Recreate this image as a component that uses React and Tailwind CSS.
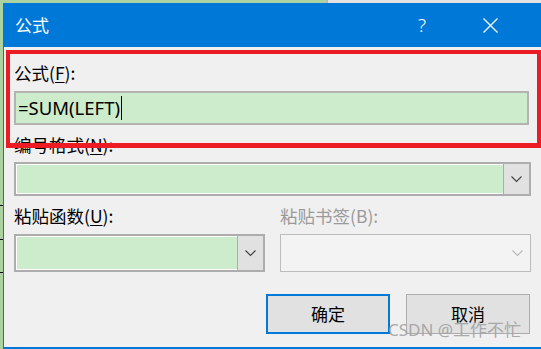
import React from "react";

const FONT = { fontFamily: '"Noto Sans", "Noto Sans CJK SC", sans-serif' };
const CJK = { fontFamily: '"Noto Sans CJK SC", "Noto Sans", sans-serif' };

function Chevron({ color = "#404040" }) {
  return (
    <svg width="11" height="7" viewBox="0 0 11 7">
      <polyline points="0.5,0.5 5.5,5.5 10.5,0.5" fill="none" stroke={color} strokeWidth="1.1" />
    </svg>
  );
}

function Combo({ className = "", disabled = false }) {
  if (disabled) {
    return (
      <div className={`flex border border-[#bcbcbc] bg-[#f3f3f3] ${className}`}>
        <div className="flex-1" />
        <div className="w-[26px] flex items-center justify-center">
          <Chevron color="#b8b8b8" />
        </div>
      </div>
    );
  }
  return (
    <div className={`flex border-2 border-[#adadad] bg-white ${className}`}>
      <div className="flex-1 pl-[1px] py-[1px]">
        <div className="h-full bg-[#cdeccb]" />
      </div>
      <div className="w-[26px] bg-[#e1e1e1] border-l border-[#adadad] flex items-center justify-center">
        <Chevron />
      </div>
    </div>
  );
}

function Label({ cn, letter, gray = false, underline = true }) {
  return (
    <div
      className={`h-[20px] flex items-center text-[17.5px] leading-[20px] ${gray ? "text-[#9a9a9a]" : "text-black"}`}
      style={CJK}
    >
      {cn}(
      <span className={underline ? "underline underline-offset-2 decoration-1" : ""}>{letter}</span>
      ):
    </div>
  );
}

export default function App() {
  return (
    <div className="relative w-[541px] h-[349px] overflow-hidden bg-[#acd2a2] flex flex-col" style={FONT}>
      {/* top strip of background */}
      <div className="h-[3px] flex shrink-0">
        <div className="w-[326px] bg-[#acd2a2]" />
        <div className="w-[2px] bg-[#b9b9b9]" />
        <div className="flex-1 bg-[#e3e3e3]" />
      </div>
      <div className="flex-1 flex">
        {/* left strip with sheet grid ticks */}
        <div className="w-[3px] relative bg-[#acd2a2]">
          <div className="absolute left-0 top-[202px] w-[3px] h-px bg-black" />
          <div className="absolute left-0 top-[236px] w-[3px] h-px bg-black" />
          <div className="absolute left-0 top-[269px] w-[3px] h-px bg-black" />
        </div>
        {/* dialog window */}
        <div className="flex-1 flex flex-col bg-[#f0f0f0] border-l border-b-2 border-[#0078d7] relative">
          <div className="h-[44px] bg-[#0078d7] flex items-center text-white shrink-0">
            <span className="ml-[11px] text-[17px]" style={CJK}>公式</span>
            <div className="flex-1" />
            <span className="text-[19px] font-light leading-none mt-[1px]" style={FONT}>?</span>
            <div className="w-[57px]" />
            <svg width="15" height="15" viewBox="0 0 15 15" className="mr-[43px]">
              <line x1="0.5" y1="0.5" x2="14.5" y2="14.5" stroke="white" strokeWidth="1.2" />
              <line x1="14.5" y1="0.5" x2="0.5" y2="14.5" stroke="white" strokeWidth="1.2" />
            </svg>
          </div>

          <div className="flex-1 flex flex-col pl-[10px] pr-[10px] pt-[16px]">
            <Label cn="公式" letter="F" />
            <div className="mt-[8px] mr-[2px] h-[34px] border-2 border-[#b3b3b3] bg-[#cdeccb] flex items-center pl-[2px]">
              <span className="text-[18.5px] text-black leading-none" style={FONT}>=SUM(LEFT)</span>
              <div className="w-px h-[24px] bg-black ml-[1px]" />
            </div>

            <div className="mt-[10px]">
              <Label cn="编号格式" letter="N" />
            </div>
            <Combo className="mt-[7px] h-[34px]" />

            <div className="mt-[10px] flex gap-[15px]">
              <div className="w-[251px] flex flex-col">
                <Label cn="粘贴函数" letter="U" />
                <Combo className="mt-[8px] h-[38px]" />
              </div>
              <div className="w-[251px] flex flex-col">
                <Label cn="粘贴书签" letter="B" gray underline={false} />
                <Combo className="mt-[8px] h-[38px]" disabled />
              </div>
            </div>

            <div className="mt-[22px] flex justify-end gap-[16px] pr-[1px]">
              <button className="w-[124px] h-[40px] border-2 border-[#0078d7] bg-[#e1e1e1] text-[17px] text-black flex items-center justify-center" style={CJK}>
                确定
              </button>
              <button className="w-[124px] h-[40px] border border-[#adadad] bg-[#e1e1e1] text-[17px] text-black flex items-center justify-center" style={CJK}>
                取消
              </button>
            </div>
          </div>
        </div>
      </div>

      {/* red annotation box */}
      <div className="absolute left-[6px] top-[50px] w-[535px] h-[98px] border-4 border-b-[5px] border-[#ed1c24] pointer-events-none" />

      {/* watermark */}
      <div
        className="absolute left-[388px] top-[319px] text-[17px] leading-[22px] text-[#a3a3a3] opacity-90 whitespace-nowrap"
        style={{ fontFamily: '"Noto Sans", "Noto Sans CJK SC", sans-serif' }}
      >
        CSDN @工作不忙
      </div>
    </div>
  );
}
